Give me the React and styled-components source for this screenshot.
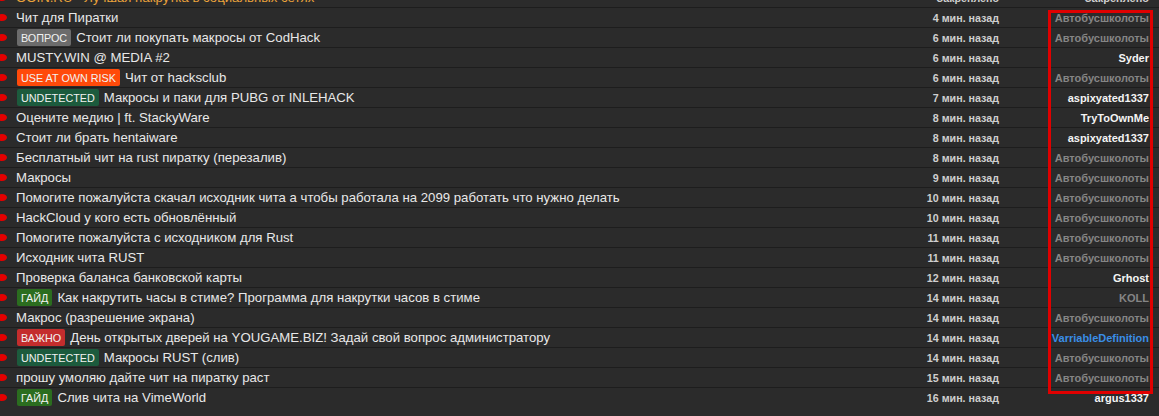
import React from "react";
import styled, { createGlobalStyle } from "styled-components";

const GlobalStyle = createGlobalStyle`
  html, body {
    margin: 0;
    padding: 0;
    background: #2b2b2b;
    font-family: "Liberation Sans", Arial, sans-serif;
    overflow: hidden;
  }
`;

const Page = styled.div`
  position: relative;
  height: 416px;
  overflow: hidden;
  background: #2b2b2b;
`;

const List = styled.div`
  margin-top: -12px;
  display: flex;
  flex-direction: column;
`;

const Row = styled.div`
  display: grid;
  grid-template-columns: 16px 1fr 150px 150px;
  align-items: center;
  height: 19px;
  padding-right: 10px;
  border-bottom: 1px solid ${(p) => (p.$last ? "transparent" : "#1d1d1d")};
`;

const DotCell = styled.div`
  height: 100%;
  display: flex;
  align-items: center;
`;

const Dot = styled.span`
  display: block;
  width: 10px;
  height: 7px;
  margin-left: -3px;
  border-radius: 50%;
  background: #e40000;
`;

const Title = styled.div`
  display: flex;
  align-items: center;
  min-width: 0;
  white-space: nowrap;
  font-size: 13.2px;
  color: ${(p) => (p.$pinned ? "#e9a23b" : "#e8e8e8")};
`;

const BADGE = {
  question: "#6c6c6c",
  risk: "#ff4a0a",
  undetected: "#1c5b3d",
  guide: "#2b6d1f",
  important: "#c42d2d",
};

const Badge = styled.span`
  display: inline-flex;
  align-items: center;
  height: 17px;
  padding: 0 4px;
  margin: 0 5px 0 1px;
  border-radius: 2px;
  font-size: 10.8px;
  color: #f2f2f2;
  background: ${(p) => BADGE[p.$kind]};
`;

const Time = styled.div`
  text-align: right;
  font-size: 10.7px;
  font-weight: bold;
  color: #cfcfcf;
  white-space: nowrap;
`;

const AUTHOR = {
  banned: "#858585",
  normal: "#f4f4f4",
  staff: "#3a8ee6",
  pinned: "#cfcfcf",
};

const Author = styled.div`
  text-align: right;
  font-size: 11px;
  font-weight: bold;
  white-space: nowrap;
  color: ${(p) => AUTHOR[p.$tone]};
`;

const Highlight = styled.div`
  position: absolute;
  top: 10px;
  right: 6px;
  width: 105px;
  height: 384px;
  box-sizing: border-box;
  border: 3px solid #e00000;
  pointer-events: none;
`;

const B = "Автобусшколоты";

const rows = [
  { title: "OOIN.RU - Лучшая накрутка в социальных сетях", time: "Закреплено", author: "Закреплено", tone: "pinned", pinned: true },
  { title: "Чит для Пиратки", time: "4 мин. назад", author: B, tone: "banned" },
  { badge: ["question", "ВОПРОС"], title: "Стоит ли покупать макросы от CodHack", time: "6 мин. назад", author: B, tone: "banned" },
  { title: "MUSTY.WIN @ MEDIA #2", time: "6 мин. назад", author: "Syder", tone: "normal" },
  { badge: ["risk", "USE AT OWN RISK"], title: "Чит от hacksclub", time: "6 мин. назад", author: B, tone: "banned" },
  { badge: ["undetected", "UNDETECTED"], title: "Макросы и паки для PUBG от INLEHACK", time: "7 мин. назад", author: "aspixyated1337", tone: "normal" },
  { title: "Оцените медию | ft. StackyWare", time: "8 мин. назад", author: "TryToOwnMe", tone: "normal" },
  { title: "Стоит ли брать hentaiware", time: "8 мин. назад", author: "aspixyated1337", tone: "normal" },
  { title: "Бесплатный чит на rust пиратку (перезалив)", time: "8 мин. назад", author: B, tone: "banned" },
  { title: "Макросы", time: "9 мин. назад", author: B, tone: "banned" },
  { title: "Помогите пожалуйста скачал исходник чита а чтобы работала на 2099 работать что нужно делать", time: "10 мин. назад", author: B, tone: "banned" },
  { title: "HackCloud у кого есть обновлённый", time: "10 мин. назад", author: B, tone: "banned" },
  { title: "Помогите пожалуйста с исходником для Rust", time: "11 мин. назад", author: B, tone: "banned" },
  { title: "Исходник чита RUST", time: "11 мин. назад", author: B, tone: "banned" },
  { title: "Проверка баланса банковской карты", time: "12 мин. назад", author: "Grhost", tone: "normal" },
  { badge: ["guide", "ГАЙД"], title: "Как накрутить часы в стиме? Программа для накрутки часов в стиме", time: "14 мин. назад", author: "KOLL", tone: "banned" },
  { title: "Макрос (разрешение экрана)", time: "14 мин. назад", author: B, tone: "banned" },
  { badge: ["important", "ВАЖНО"], title: "День открытых дверей на YOUGAME.BIZ! Задай свой вопрос администратору", time: "14 мин. назад", author: "VarriableDefinition", tone: "staff" },
  { badge: ["undetected", "UNDETECTED"], title: "Макросы RUST (слив)", time: "14 мин. назад", author: B, tone: "banned" },
  { title: "прошу умоляю дайте чит на пиратку раст", time: "15 мин. назад", author: B, tone: "banned" },
  { badge: ["guide", "ГАЙД"], title: "Слив чита на VimeWorld", time: "16 мин. назад", author: "argus1337", tone: "normal" },
];

export default function App() {
  return (
    <>
      <GlobalStyle />
      <Page>
        <List>
          {rows.map((r, i) => (
            <Row key={i} $last={i === rows.length - 1}>
              <DotCell>
                <Dot />
              </DotCell>
              <Title $pinned={r.pinned}>
                {r.badge && <Badge $kind={r.badge[0]}>{r.badge[1]}</Badge>}
                {r.title}
              </Title>
              <Time>{r.time}</Time>
              <Author $tone={r.tone}>{r.author}</Author>
            </Row>
          ))}
        </List>
        <Highlight />
      </Page>
    </>
  );
}
